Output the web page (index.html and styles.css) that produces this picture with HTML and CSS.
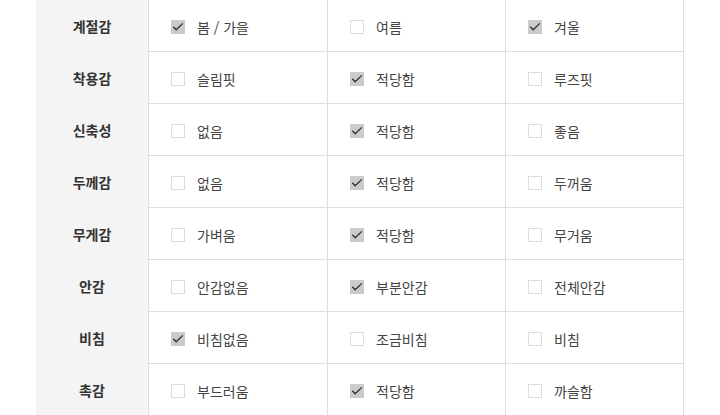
FILE: index.html
```html
<!DOCTYPE html>
<html lang="ko">
<head>
<meta charset="utf-8">
<link rel="stylesheet" href="styles.css">
</head>
<body>
<div class="sheet">
  <div class="row">
    <div class="head">계절감</div>
    <div class="cell c1"><span class="box on"><svg viewBox="0 0 14 14"><path d="M2.3 6.8 L5.2 9.8 L11.8 3.4"/></svg></span><span class="lbl">봄 / 가을</span></div>
    <div class="cell c2"><span class="box"></span><span class="lbl">여름</span></div>
    <div class="cell c3"><span class="box on"><svg viewBox="0 0 14 14"><path d="M2.3 6.8 L5.2 9.8 L11.8 3.4"/></svg></span><span class="lbl">겨울</span></div>
  </div>
  <div class="row">
    <div class="head">착용감</div>
    <div class="cell c1"><span class="box"></span><span class="lbl">슬림핏</span></div>
    <div class="cell c2"><span class="box on"><svg viewBox="0 0 14 14"><path d="M2.3 6.8 L5.2 9.8 L11.8 3.4"/></svg></span><span class="lbl">적당함</span></div>
    <div class="cell c3"><span class="box"></span><span class="lbl">루즈핏</span></div>
  </div>
  <div class="row">
    <div class="head">신축성</div>
    <div class="cell c1"><span class="box"></span><span class="lbl">없음</span></div>
    <div class="cell c2"><span class="box on"><svg viewBox="0 0 14 14"><path d="M2.3 6.8 L5.2 9.8 L11.8 3.4"/></svg></span><span class="lbl">적당함</span></div>
    <div class="cell c3"><span class="box"></span><span class="lbl">좋음</span></div>
  </div>
  <div class="row">
    <div class="head">두께감</div>
    <div class="cell c1"><span class="box"></span><span class="lbl">없음</span></div>
    <div class="cell c2"><span class="box on"><svg viewBox="0 0 14 14"><path d="M2.3 6.8 L5.2 9.8 L11.8 3.4"/></svg></span><span class="lbl">적당함</span></div>
    <div class="cell c3"><span class="box"></span><span class="lbl">두꺼움</span></div>
  </div>
  <div class="row">
    <div class="head">무게감</div>
    <div class="cell c1"><span class="box"></span><span class="lbl">가벼움</span></div>
    <div class="cell c2"><span class="box on"><svg viewBox="0 0 14 14"><path d="M2.3 6.8 L5.2 9.8 L11.8 3.4"/></svg></span><span class="lbl">적당함</span></div>
    <div class="cell c3"><span class="box"></span><span class="lbl">무거움</span></div>
  </div>
  <div class="row">
    <div class="head">안감</div>
    <div class="cell c1"><span class="box"></span><span class="lbl">안감없음</span></div>
    <div class="cell c2"><span class="box on"><svg viewBox="0 0 14 14"><path d="M2.3 6.8 L5.2 9.8 L11.8 3.4"/></svg></span><span class="lbl">부분안감</span></div>
    <div class="cell c3"><span class="box"></span><span class="lbl">전체안감</span></div>
  </div>
  <div class="row">
    <div class="head">비침</div>
    <div class="cell c1"><span class="box on"><svg viewBox="0 0 14 14"><path d="M2.3 6.8 L5.2 9.8 L11.8 3.4"/></svg></span><span class="lbl">비침없음</span></div>
    <div class="cell c2"><span class="box"></span><span class="lbl">조금비침</span></div>
    <div class="cell c3"><span class="box"></span><span class="lbl">비침</span></div>
  </div>
  <div class="row">
    <div class="head">촉감</div>
    <div class="cell c1"><span class="box"></span><span class="lbl">부드러움</span></div>
    <div class="cell c2"><span class="box on"><svg viewBox="0 0 14 14"><path d="M2.3 6.8 L5.2 9.8 L11.8 3.4"/></svg></span><span class="lbl">적당함</span></div>
    <div class="cell c3"><span class="box"></span><span class="lbl">까슬함</span></div>
  </div>
</div>
</body>
</html>
```
FILE: styles.css
```css
html, body {
  margin: 0;
  padding: 0;
  background: #fff;
}
body {
  font-family: "Noto Sans CJK KR", "Noto Sans", sans-serif;
  color: #333;
  font-size: 14px;
}
.sheet {
  margin-left: 36px;
  width: 648px;
}
.row {
  display: flex;
  height: 52px;
}
.head {
  box-sizing: border-box;
  width: 113px;
  background: #f4f4f4;
  border-right: 1px solid #dedede;
  display: flex;
  align-items: center;
  justify-content: center;
  font-weight: bold;
  color: #333;
  padding-bottom: 1px;
}
.cell {
  box-sizing: border-box;
  display: flex;
  align-items: center;
  gap: 12px;
  padding-left: 22px;
  padding-top: 3px;
  border-right: 1px solid #dedede;
  border-bottom: 1px solid #dedede;
}
.c1 { width: 179px; }
.c2 { width: 178px; }
.c3 { width: 178px; }
.box {
  box-sizing: border-box;
  width: 14px;
  height: 14px;
  border: 1px solid #dcdcdc;
  background: #fff;
  display: block;
  flex: none;
  position: relative;
}
.box.on {
  background: #cbcbcb;
  border-color: #cbcbcb;
}
.box svg {
  position: absolute;
  left: -1px;
  top: -1px;
  width: 14px;
  height: 14px;
}
.box svg path {
  fill: none;
  stroke: #2f2f2f;
  stroke-width: 1.3;
}
.lbl {
  color: #444;
  line-height: 20px;
}
```
